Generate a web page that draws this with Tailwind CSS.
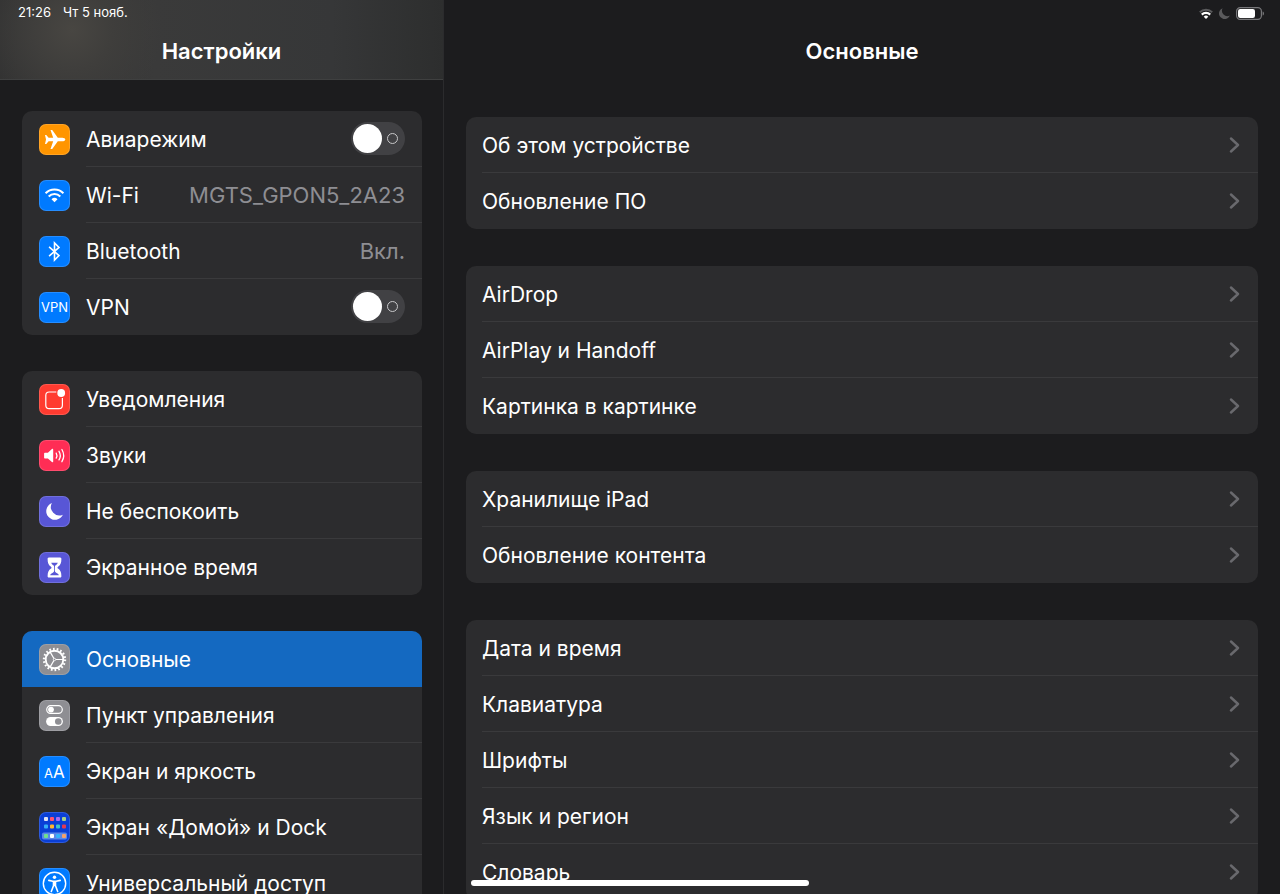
<!DOCTYPE html>
<html lang="ru">
<head>
  <meta charset="UTF-8" />
  <meta name="viewport" content="width=device-width, initial-scale=1" />
  <title>Настройки</title>
  <script src="https://cdn.jsdelivr.net/npm/@tailwindcss/browser@4"></script>
</head>
<body class="bg-[#1c1c1e] text-white font-['Inter','Liberation_Sans',sans-serif]">
  <div class="relative flex h-screen overflow-hidden">

    <!-- Боковая панель -->
    <aside class="flex w-[444px] shrink-0 flex-col border-r border-[#2b2b2d]">
      <header class="h-20 shrink-0 border-b border-[#3f4040] bg-[radial-gradient(circle_at_72px_30px,#484642_0px,#3f3e3c_40px,#3a3a3a00_90px),linear-gradient(to_right,#323232,#3a3a3a_35%,#363738_75%,#2d2e2e)]">
        <div class="flex h-[26px] items-center gap-3 pl-[18px] text-[13px]">
          <time>21:26</time>
          <span>Чт 5 нояб.</span>
        </div>
        <h1 class="text-center text-[22px] leading-[50px] font-semibold">Настройки</h1>
      </header>
      <nav id="sidebar" class="flex min-h-0 flex-1 flex-col gap-9 overflow-hidden pt-[31px] pr-[21px] pl-[22px]"></nav>
    </aside>

    <!-- Основная панель -->
    <main class="flex min-w-0 flex-1 flex-col">
      <header class="h-20 shrink-0">
        <div class="flex h-[26px] items-center justify-end gap-1.5 pr-4">
          <svg class="h-[11px] w-[14px]" viewBox="0 0 14 11" fill="none" stroke="#fff" stroke-width="2">
            <path stroke="#5a5a5c" d="M.8 4.300a8.800 8.800 0 0 1 12.400 0" />
            <path stroke-width="2.200" d="M2.800 6.600a6 6 0 0 1 8.400 0" />
            <path fill="#fff" stroke="none" d="M7 11 4.700 8.700a3.300 3.300 0 0 1 4.600 0z" />
          </svg>
          <svg class="h-[11px] w-[11px]" viewBox="0 0 11 11" fill="#5a5a5c">
            <path d="M3.600.2a5.600 5.600 0 1 0 7.200 7.300A5.400 5.400 0 0 1 3.600.2z" />
          </svg>
          <svg class="h-[13px] w-7" viewBox="0 0 28 13">
            <rect x=".6" y=".6" width="24.800" height="11.800" rx="3.600" fill="none" stroke="#77777a" stroke-width="1.200" />
            <rect x="2" y="2" width="17" height="9" rx="2.200" fill="#fff" />
            <path d="M26.600 4.500v4c1-.4 1.400-1.200 1.400-2s-.4-1.600-1.400-2z" fill="#77777a" />
          </svg>
        </div>
        <h2 class="text-center text-[22px] leading-[50px] font-semibold">Основные</h2>
      </header>
      <div id="content" class="flex min-h-0 flex-1 flex-col gap-[37px] overflow-hidden px-[22px] pt-[37px]"></div>
    </main>

    <div class="absolute bottom-2 left-1/2 h-1.5 w-[338px] -translate-x-1/2 rounded-full bg-white"></div>
  </div>

  <script>
    // Иконки
    const icons = {
      plane: `<path fill="#fff" d="M26.300 15.500c0-1-1.300-1.800-3-1.800h-4.500L13.600 6.600c-.2-.4-.5-.5-.9-.5h-1.200l2.700 7.600H9.600L7.500 11.300c-.2-.2-.4-.3-.7-.3H6l1 4.500-1 4.500h.8c.3 0 .5-.1.700-.3l2.100-2.400h4.600l-2.700 7.600h1.200c.4 0 .7-.1.900-.5l5.200-7.100h4.500c1.700 0 3-.8 3-1.800z" />`,
      wifi: `<g fill="none" stroke="#fff" stroke-width="2"><path d="M6.600 13.300a12.500 12.500 0 0 1 17.800 0" /><path d="M9.700 16.500a8.200 8.200 0 0 1 11.600 0" /></g><path fill="#fff" d="m15.500 22.300-3-3a4.300 4.300 0 0 1 6 0z" />`,
      bluetooth: `<path fill="none" stroke="#fff" stroke-width="1.600" stroke-linejoin="miter" d="m10.100 10.900 9.900 8.700-4.500 4.500V6.900l4.500 4.500-9.900 8.700" />`,
      vpn: `<text x="15.500" y="20" text-anchor="middle" font-size="13" fill="#fff">VPN</text>`,
      bell: `<path fill="none" stroke="#fff" stroke-width="1.200" d="M17.300 8h-7.100a3.400 3.400 0 0 0-3.400 3.400v9.800a3.400 3.400 0 0 0 3.400 3.400h9.800a3.400 3.400 0 0 0 3.400-3.400v-7.100" /><circle cx="22.200" cy="9" r="3.900" fill="#fff" />`,
      sound: `<path fill="#fff" d="M5.900 12.700h3l4-3.600c.7-.5 1.300-.2 1.300.6v11.800c0 .8-.6 1.100-1.300.6l-4-3.600h-3a.8.8 0 0 1-.8-.8v-4.200c0-.5.400-.8.800-.8z" /><g fill="none" stroke="#fff" stroke-width="1.300" stroke-linecap="round"><path d="M17.200 13.100a5 5 0 0 1 0 5" /><path d="M20 11.300a8.300 8.300 0 0 1 0 8.600" /><path d="M22.900 9.500a12 12 0 0 1 0 12.200" /></g>`,
      moon: `<path fill="#fff" d="M12.900 7a8.700 8.700 0 1 0 11 11.700A8.500 8.500 0 0 1 12.900 7z" />`,
      hourglass: `<path fill="#fff" d="M9.900 5.500h11.200c1 0 1.300.8 1.300 1.400 0 4-1 6.100-3.400 7.800-.7.500-.7 1.300 0 1.800 2.400 1.700 3.400 3.800 3.400 7.700 0 .6-.3 1.300-1.300 1.300H9.900c-1 0-1.300-.7-1.300-1.300 0-3.900 1-6 3.400-7.700.7-.5.7-1.300 0-1.800-2.400-1.700-3.400-3.800-3.400-7.800 0-.6.3-1.400 1.300-1.400z" /><path fill="#5856d6" d="M12.200 10.700h6.600c-.4 1.100-1 1.700-1.900 2.400-.8.600-1 1.100-1 2.400v3.300c0 1.100.7 1.600 1.700 2.200 1.300.700 2 1.200 2.200 2.300h-8.600c.2-1.100.9-1.600 2.200-2.300 1-.6 1.700-1.100 1.700-2.200v-3.300c0-1.300-.2-1.800-1-2.400-.9-.7-1.500-1.300-1.900-2.400z" />`,
      gear: `<g fill="none" stroke="#fff"><circle cx="15.500" cy="15.500" r="10.600" stroke-width="2.200" stroke-dasharray="1.700 2" /><circle cx="15.500" cy="15.500" r="8.800" stroke-width="1.900" /><path stroke-width="1.200" d="M15.500 15.500h8.500M15.500 15.500l-4.300-7.400M15.500 15.500l-4.300 7.400" /></g><circle cx="15.500" cy="15.500" r="1.200" fill="#8e8e93" stroke="#fff" stroke-width=".8" />`,
      switches: `<rect x="7.700" y="5.700" width="15.600" height="7.700" rx="3.850" fill="none" stroke="#fff" stroke-width="1.200" /><circle cx="12" cy="9.550" r="2.900" fill="#fff" /><rect x="7.100" y="17" width="16.800" height="9" rx="4.500" fill="#fff" /><circle cx="19.300" cy="21.500" r="3.300" fill="#8e8e93" />`,
      text: `<text x="5" y="22" font-size="13" fill="#fff">A</text><text x="14" y="22" font-size="17" fill="#fff">A</text>`,
      home: `<rect x="3" y="20.500" width="25" height="7" rx="1.800" fill="#5b87e8" />
        <rect x="5" y="5" width="4" height="4" rx="1" fill="#dfe3f5" /><rect x="11" y="5" width="4" height="4" rx="1" fill="#ff5470" /><rect x="17" y="5" width="4" height="4" rx="1" fill="#a86cf0" /><rect x="23" y="5" width="4" height="4" rx="1" fill="#a7d088" />
        <rect x="5" y="12.500" width="4" height="4" rx="1" fill="#35aef7" /><rect x="11" y="12.500" width="4" height="4" rx="1" fill="#ffb52e" /><rect x="17" y="12.500" width="4" height="4" rx="1" fill="#3cc3c8" /><rect x="23" y="12.500" width="4" height="4" rx="1" fill="#e03a55" />
        <rect x="5" y="22" width="4" height="4" rx="1" fill="#6fe08d" /><rect x="11" y="22" width="4" height="4" rx="1" fill="#fff" /><rect x="17" y="22" width="4" height="4" rx="1" fill="#35b2f7" /><rect x="23" y="22" width="4" height="4" rx="1" fill="#f5a06a" />`,
      access: `<circle cx="15.500" cy="15.500" r="11.200" fill="none" stroke="#fff" stroke-width="1.400" /><circle cx="15.500" cy="9.300" r="1.700" fill="#fff" /><path fill="none" stroke="#fff" stroke-width="1.600" stroke-linecap="round" stroke-linejoin="round" d="M9.800 12.400l4 .9h3.400l4-.9M14.500 13.500v4.200l-2.200 5.800M16.500 13.500v4.200l2.200 5.800M15.500 13.500v4" />`
    };

    const groups = [
      [
        { name: "Авиарежим", icon: "plane", color: "bg-[#ff9500]", toggle: true },
        { name: "Wi-Fi", icon: "wifi", color: "bg-[#007aff]", value: "MGTS_GPON5_2A23" },
        { name: "Bluetooth", icon: "bluetooth", color: "bg-[#007aff]", value: "Вкл." },
        { name: "VPN", icon: "vpn", color: "bg-[#007aff]", toggle: true }
      ],
      [
        { name: "Уведомления", icon: "bell", color: "bg-[#ff3b30]" },
        { name: "Звуки", icon: "sound", color: "bg-[#ff2d55]" },
        { name: "Не беспокоить", icon: "moon", color: "bg-[#5856d6]" },
        { name: "Экранное время", icon: "hourglass", color: "bg-[#5856d6]" }
      ],
      [
        { name: "Основные", icon: "gear", color: "bg-[#8e8e93]", active: true },
        { name: "Пункт управления", icon: "switches", color: "bg-[#8e8e93]" },
        { name: "Экран и яркость", icon: "text", color: "bg-[#007aff]" },
        { name: "Экран «Домой» и Dock", icon: "home", color: "bg-[#0a3fd6]" },
        { name: "Универсальный доступ", icon: "access", color: "bg-[#007aff]" }
      ]
    ];

    const general = [
      ["Об этом устройстве", "Обновление ПО"],
      ["AirDrop", "AirPlay и Handoff", "Картинка в картинке"],
      ["Хранилище iPad", "Обновление контента"],
      ["Дата и время", "Клавиатура", "Шрифты", "Язык и регион", "Словарь"]
    ];

    function sidebarRow(item) {
      const tag = item.toggle ? "label" : "a";
      const attrs = item.toggle ? "" : `href="#"`;
      let right = "";
      if (item.toggle) {
        right = `<input type="checkbox" class="relative h-[33px] w-[54px] shrink-0 appearance-none rounded-full bg-[#414144] before:absolute before:top-0.5 before:left-0.5 before:size-[29px] before:rounded-full before:bg-white after:absolute after:top-[11px] after:right-[7px] after:size-[11px] after:rounded-full after:border after:border-[#c8c8ca] checked:bg-[#30d158] checked:before:left-[23px] checked:after:hidden" />`;
      } else if (item.value) {
        right = `<span class="pt-0.5 text-[22px] text-[#8e8e93]">${item.value}</span>`;
      }
      return `
        <li class="group">
          <${tag} ${attrs} class="flex h-14 items-center gap-4 pl-[17px] ${item.active ? "bg-[#1469c1]" : ""}">
            <svg class="size-[31px] shrink-0 rounded-[7px] ring-1 ring-white/15 ring-inset ${item.color}" viewBox="0 0 31 31">${icons[item.icon]}</svg>
            <span class="flex h-14 min-w-0 flex-1 items-center justify-between border-b pr-[17px] whitespace-nowrap group-last:border-transparent ${item.active ? "border-transparent" : "border-[#3a3a3c]"}">
              <span class="pt-0.5">${item.name}</span>${right}
            </span>
          </${tag}>
        </li>`;
    }

    function contentRow(name) {
      return `
        <li class="group">
          <a href="#" class="block pl-4">
            <span class="flex h-14 items-center justify-between border-b border-[#3a3a3c] pr-[18px] group-last:border-transparent">
              <span class="pt-0.5">${name}</span>
              <svg class="h-4 w-[11px]" viewBox="0 0 11 16" fill="none" stroke="#69696d" stroke-width="2.400" stroke-linecap="round" stroke-linejoin="round"><path d="m2 1.500 7 6.500-7 6.500" /></svg>
            </span>
          </a>
        </li>`;
    }

    function card(rows) {
      return `<ul class="shrink-0 overflow-hidden rounded-[10px] bg-[#2c2c2e] text-[21px]">${rows.join("")}</ul>`;
    }

    document.getElementById("sidebar").innerHTML = groups.map(g => card(g.map(sidebarRow))).join("");
    document.getElementById("content").innerHTML = general.map(g => card(g.map(contentRow))).join("");
  </script>
</body>
</html>
